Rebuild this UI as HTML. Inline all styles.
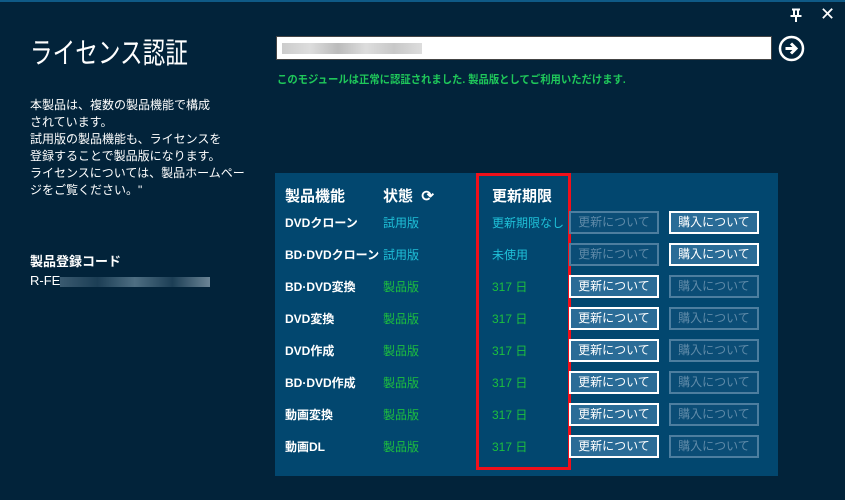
<!DOCTYPE html>
<html><head><meta charset="utf-8"><style>
*{margin:0;padding:0;box-sizing:border-box}
body{width:845px;height:500px;background:#02233a;position:relative;overflow:hidden;font-family:"Liberation Sans","Noto Sans CJK JP",sans-serif;color:#fff}
.a{position:absolute;white-space:nowrap}
.topline{left:0;top:0;width:845px;height:2px;background:#0f5a86}
.panel{left:275px;top:173px;width:503px;height:303px;background:#02476f}
.red{left:476px;top:173px;width:95px;height:297px;border:3px solid #f0101a}
.btn{position:absolute;width:90px;height:23px;font-size:12px;text-align:center;line-height:19px}
.on{border:2px solid #fff;background:#2a6c97;color:#fff}
.off{border:2px solid #4d7e9f;background:#0b4d76;color:#5f8aa8}
.f{font-size:12px;font-weight:bold}
.s{font-size:12px}
</style></head><body>
<div class="a topline"></div>
<svg class="a" style="left:789px;top:8px" width="14" height="15" viewBox="0 0 14 15"><path d="M3 1.5h8M5 1.5v6M9 1.5v6M1.5 8h11M7 8v6" stroke="#fff" stroke-width="2" fill="none"/></svg>
<div class="a" style="left:820px;top:4px;font-size:18px">✕</div>
<div class="a" style="left:30px;top:30px;font-size:29px;transform:scaleX(0.78);transform-origin:left top">ライセンス認証</div>
<div class="a" style="left:276px;top:36px;width:496px;height:24px;background:#fff;border:1px solid #444"><div style="position:absolute;left:5px;top:6px;width:140px;height:11px;background:linear-gradient(90deg,#ccc,#ddd,#bbb,#ddd,#c8c8c8,#ddd)"></div></div>
<svg class="a" style="left:778px;top:35px" width="27" height="27" viewBox="0 0 27 27"><circle cx="13.5" cy="13.5" r="11.5" fill="none" stroke="#fff" stroke-width="2.5"/><path d="M7.5 13.5h10M13 8.5l5 5-5 5" fill="none" stroke="#fff" stroke-width="3"/></svg>
<div class="a" style="left:277px;top:71px;font-size:11px;color:#1fc85a;font-weight:bold;transform:scaleX(0.94);transform-origin:left top">このモジュールは正常に認証されました. 製品版としてご利用いただけます.</div>
<div class="a" style="left:30px;top:97px;font-size:12px;line-height:17px">本製品は、複数の製品機能で構成<br>されています。<br>試用版の製品機能も、ライセンスを<br>登録することで製品版になります。<br>ライセンスについては、製品ホームペー<br>ジをご覧ください。"</div>
<div class="a f" style="left:30px;top:251px;font-size:13px">製品登録コード</div>
<div class="a" style="left:30px;top:273px;font-size:13px">R-FE<span style="display:inline-block;width:150px;height:10px;background:linear-gradient(90deg,#3a5a70,#1c3e55,#4e6e82,#1c3e55,#6b8596);vertical-align:middle"></span></div>
<div class="a panel"></div>
<div class="a f" style="left:285px;top:185px;font-size:15px">製品機能</div>
<div class="a f" style="left:383px;top:185px;font-size:15px">状態 &nbsp;⟳</div>
<div class="a f" style="left:492px;top:185px;font-size:15px">更新期限</div>
<div class="a red"></div>
<div id="rows"></div>
<script>
var r=[["DVDクローン","試用版","更新期限なし",0],["BD·DVDクローン","試用版","未使用",0],["BD·DVD変換","製品版","317 日",1],["DVD変換","製品版","317 日",1],["DVD作成","製品版","317 日",1],["BD·DVD作成","製品版","317 日",1],["動画変換","製品版","317 日",1],["動画DL","製品版","317 日",1]];
var h="";r.forEach(function(x,i){var y=214+i*32;var c=x[3]?"#1dbf3e":"#1fc0d8";
h+='<div class="a f" style="left:285px;top:'+y+'px">'+x[0]+'</div>';
h+='<div class="a s" style="left:383px;top:'+y+'px;color:'+c+'">'+x[1]+'</div>';
h+='<div class="a s" style="left:492px;top:'+y+'px;color:'+c+'">'+x[2]+'</div>';
h+='<div class="btn '+(x[3]?'on':'off')+'" style="left:569px;top:'+(y-3)+'px">更新について</div>';
h+='<div class="btn '+(x[3]?'off':'on')+'" style="left:669px;top:'+(y-3)+'px">購入について</div>';});
document.getElementById("rows").innerHTML=h;
</script>
</body></html>
